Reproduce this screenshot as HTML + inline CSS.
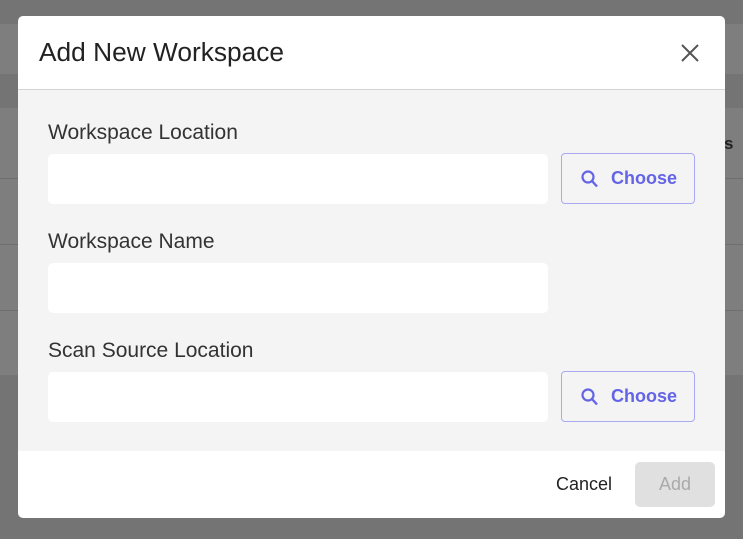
<!DOCTYPE html><html><head><style>
body{margin:0;width:743px;height:539px;background:#747474;position:relative;overflow:hidden;font-family:"Liberation Sans",sans-serif}
.band{position:absolute;left:0;width:743px}
.m{position:absolute;left:18px;top:16px;width:707px;height:502px;background:#fff;border-radius:5px;overflow:hidden}
.hd{height:73px;border-bottom:1px solid #d4d4d4;position:relative}
.hd h1{margin:0;position:absolute;left:21px;top:21px;font-weight:normal;font-size:26.3px;color:#222}
.bd{position:absolute;top:74px;left:0;width:707px;height:361px;background:#f4f4f4}
.lb{position:absolute;left:30px;font-size:21px;color:#333}
.in{position:absolute;left:30px;width:500px;height:50px;background:#fff;border-radius:5px}
.bt{position:absolute;left:543px;border:1px solid #a9a9f0;border-radius:4px;color:#6464e6;font-weight:bold;font-size:18px;box-sizing:border-box;width:134px;height:51px}
.bt svg{position:absolute;left:19px;top:16px}
.bt span{position:absolute;left:49px;top:14px}
</style></head><body>
<div class="band" style="top:24px;height:50px;background:#7e7e7e"></div>
<div class="band" style="top:108px;height:267px;background:#7e7e7e"></div>
<div class="band" style="top:178px;height:1px;background:#6e6e6e"></div>
<div class="band" style="top:244px;height:1px;background:#6e6e6e"></div>
<div class="band" style="top:310px;height:1px;background:#6e6e6e"></div>
<div style="position:absolute;left:724px;top:134px;font-weight:bold;font-size:17px;color:#222">s</div>
<div class="m">
<div class="hd"><h1>Add New Workspace</h1>
<svg style="position:absolute;left:663px;top:28px" width="18" height="18" viewBox="0 0 18 18"><path d="M1 1L17 17M17 1L1 17" stroke="#555" stroke-width="2"/></svg></div>
<div class="bd">
<div class="lb" style="top:31px">Workspace Location</div>
<div class="in" style="top:64px"></div>
<div class="bt" style="top:63px"><svg width="17" height="18" viewBox="0 0 17 18"><circle cx="7" cy="7" r="5.5" fill="none" stroke="#6464e6" stroke-width="2.2"/><path d="M11 11L16 16.5" stroke="#6464e6" stroke-width="2.4"/></svg><span>Choose</span></div>
<div class="lb" style="top:140px">Workspace Name</div>
<div class="in" style="top:173px"></div>
<div class="lb" style="top:249px">Scan Source Location</div>
<div class="in" style="top:282px"></div>
<div class="bt" style="top:281px"><svg width="17" height="18" viewBox="0 0 17 18"><circle cx="7" cy="7" r="5.5" fill="none" stroke="#6464e6" stroke-width="2.2"/><path d="M11 11L16 16.5" stroke="#6464e6" stroke-width="2.4"/></svg><span>Choose</span></div>
</div>
<div style="position:absolute;left:538px;top:458px;font-size:18px;color:#222">Cancel</div>
<div style="position:absolute;left:617px;top:446px;width:80px;height:45px;background:#e0e0e0;border-radius:5px;color:#aaa;font-size:18px;text-align:center;line-height:45px">Add</div>
</div>
</body></html>
